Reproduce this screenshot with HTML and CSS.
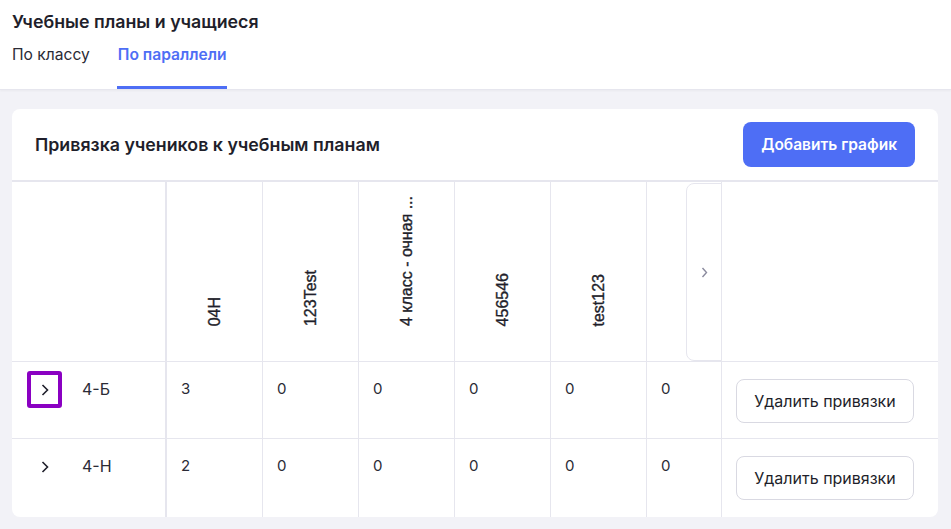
FILE: index.html
```html
<!DOCTYPE html>
<html lang="ru">
<head>
    <meta charset="UTF-8">
    <meta name="viewport" content="width=device-width, initial-scale=1.0">
    <title>Учебные планы и учащиеся</title>
    <link rel="stylesheet" href="styles.css">
</head>
<body>
    <header class="page-header">
        <h1>Учебные планы и учащиеся</h1>
        <nav class="tabs">
            <a href="#" class="tab">По классу</a>
            <a href="#" class="tab active">По параллели</a>
        </nav>
    </header>

    <main class="card">
        <div class="card-head">
            <h2>Привязка учеников к учебным планам</h2>
            <button class="btn-primary">Добавить график</button>
        </div>

        <div class="grid-wrap">
            <div class="grid">
                <!-- шапка -->
                <div class="cell head first"></div>
                <div class="cell head"><span class="vtext">04H</span></div>
                <div class="cell head"><span class="vtext">123Test</span></div>
                <div class="cell head"><span class="vtext" title="4 класс - очная форма обучения">4 класс - очная ...</span></div>
                <div class="cell head"><span class="vtext">456546</span></div>
                <div class="cell head"><span class="vtext">test123</span></div>
                <div class="cell head"></div>
                <div class="cell head last"></div>

                <!-- 4-Б -->
                <div class="cell first">
                    <button class="toggle focused">
                        <svg width="8" height="12" viewBox="0 0 8 12"><path d="M1.5 1 L6.5 6 L1.5 11" fill="none" stroke="#1f1f2b" stroke-width="1.6"/></svg>
                    </button>
                    <span>4-Б</span>
                </div>
                <div class="cell">3</div>
                <div class="cell">0</div>
                <div class="cell">0</div>
                <div class="cell">0</div>
                <div class="cell">0</div>
                <div class="cell">0</div>
                <div class="cell last"><button class="btn-outline">Удалить привязки</button></div>

                <!-- 4-Н -->
                <div class="cell first">
                    <button class="toggle">
                        <svg width="8" height="12" viewBox="0 0 8 12"><path d="M1.5 1 L6.5 6 L1.5 11" fill="none" stroke="#1f1f2b" stroke-width="1.6"/></svg>
                    </button>
                    <span>4-Н</span>
                </div>
                <div class="cell">2</div>
                <div class="cell">0</div>
                <div class="cell">0</div>
                <div class="cell">0</div>
                <div class="cell">0</div>
                <div class="cell">0</div>
                <div class="cell last"><button class="btn-outline">Удалить привязки</button></div>
            </div>

            <button class="scroll-next">
                <svg width="7" height="11" viewBox="0 0 7 11"><path d="M1.5 1 L5.5 5.5 L1.5 10" fill="none" stroke="#8b8b9e" stroke-width="1.4"/></svg>
            </button>
        </div>
    </main>
</body>
</html>
```

FILE: styles.css
```css
* { box-sizing: border-box; }
body { margin: 0; background: #f2f2f7; font-family: Inter, "Noto Sans", sans-serif; color: #1f1f2b; }
button { font-family: inherit; cursor: pointer; }

.page-header { background: #fff; padding: 9px 12px 0; border-bottom: 1px solid #e6e6ee; box-shadow: 0 1px 2px rgba(0,0,0,0.04); }
.page-header h1 { margin: 0; font-size: 17.8px; line-height: 25px; font-weight: 600; }
.tabs { display: flex; gap: 27px; }
.tab { display: block; height: 55px; padding-top: 10px; font-size: 15.6px; line-height: 22px; color: #2b2b36; text-decoration: none; border-bottom: 3px solid transparent; }
.tab.active { color: #4e6ef5; font-weight: 600; border-bottom-color: #4e6ef5; padding: 10px 0 0 1px; }

.card { margin: 19px 13px 12px 12px; background: #fff; border-radius: 8px; overflow: hidden; }
.card-head { height: 73px; display: flex; justify-content: space-between; align-items: center; padding: 0 23px; border-bottom: 2px solid #e6e6ee; }
.card-head h2 { margin: 0; font-size: 17.8px; font-weight: 600; }
.btn-primary { height: 45px; padding: 0 18px; border: 0; border-radius: 8px; background: #4e6ef5; color: #fff; font-size: 15.5px; font-weight: 600; }

.grid-wrap { position: relative; }
.grid { display: grid; grid-template-columns: 155px 96px 96px 96px 96px 96px 75px 1fr; grid-template-rows: 180px 77px 78px; }
.cell { border-right: 1px solid #e6e6ee; border-bottom: 1px solid #e6e6ee; padding: 16px 14px 0; font-size: 15px; line-height: 22px; color: #2b2b36; }
.cell.first { border-right-width: 2px; }
.cell.last { border-right: 0; padding: 17px 14px 0; }
.grid > .cell:nth-last-child(-n+8) { border-bottom: 0; }
.cell.head { display: flex; justify-content: center; align-items: flex-end; padding: 8px 0 35px; }
.vtext { writing-mode: vertical-rl; transform: rotate(180deg); white-space: nowrap; font-family: "Liberation Sans", Arial, sans-serif; font-size: 16px; line-height: 18px; color: #1f1f2b; -webkit-text-stroke: 0.35px #1f1f2b; }

.cell.first:not(.head) { display: flex; align-items: flex-start; gap: 20px; padding: 9px 0 0 15px; }
.cell.first span { line-height: 37px; font-size: 16px; }
.toggle { width: 35px; height: 37px; border: 4px solid transparent; border-radius: 3px; background: none; display: flex; align-items: center; justify-content: center; padding: 0; }
.toggle.focused { border-color: #8a00c2; }

.btn-outline { width: 178px; height: 44px; border: 1px solid #d9d9e2; border-radius: 8px; background: #fff; color: #1f1f2b; font-size: 16px; }

.scroll-next { position: absolute; left: 674px; top: 1px; width: 36px; height: 178px; background: #fff; border: 1px solid #e6e6ee; border-radius: 8px 0 0 8px; display: flex; align-items: center; justify-content: center; padding: 0; }
```
